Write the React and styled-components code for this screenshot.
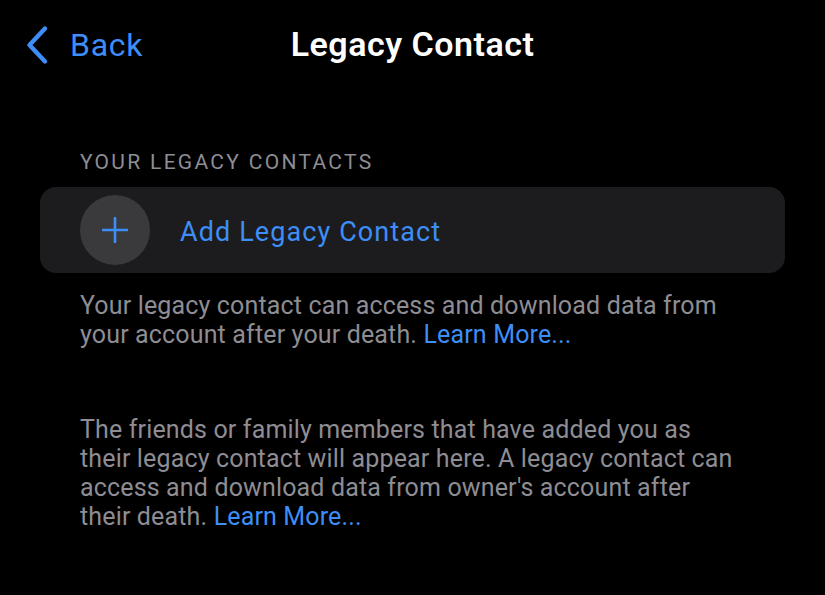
import React from 'react';
import styled, { createGlobalStyle } from 'styled-components';

const GlobalStyle = createGlobalStyle`
  html, body {
    margin: 0;
    padding: 0;
    background: #000;
  }
  body {
    font-family: Roboto, "Noto Sans", sans-serif;
    -webkit-font-smoothing: antialiased;
  }
`;

const App = () => {
  return (
    <Page>
      <GlobalStyle />
      <NavBar>
        <BackButton>
          <svg width="24" height="40" viewBox="0 0 24 40">
            <path
              d="M20 3.5 L4.5 20 L20 36.5"
              fill="none"
              stroke="#3e8ef7"
              strokeWidth="4.4"
              strokeLinecap="round"
              strokeLinejoin="round"
            />
          </svg>
          <BackLabel>Back</BackLabel>
        </BackButton>
        <Title>Legacy Contact</Title>
      </NavBar>

      <Content>
        <SectionHeader>YOUR LEGACY CONTACTS</SectionHeader>
        <Card>
          <AddCircle>
            <svg width="26" height="26" viewBox="0 0 26 26">
              <path d="M13 1 V25 M1 13 H25" stroke="#3e8ef7" strokeWidth="2.6" strokeLinecap="round" />
            </svg>
          </AddCircle>
          <AddLabel>Add Legacy Contact</AddLabel>
        </Card>
        <Footnote>
          Your legacy contact can access and download data from your account after your death.{' '}
          <Link>Learn More...</Link>
        </Footnote>

        <Footnote $spaced>
          The friends or family members that have added you as their legacy contact will appear here. A
          legacy contact can access and download data from owner's account after their death.{' '}
          <Link>Learn More...</Link>
        </Footnote>
      </Content>
    </Page>
  );
};

export default App;

const Page = styled.div`
  width: 825px;
  height: 595px;
  background: #000;
  overflow: hidden;
`;

const NavBar = styled.header`
  position: relative;
  height: 90px;
  display: flex;
  align-items: center;
  justify-content: center;
`;

const BackButton = styled.div`
  position: absolute;
  left: 25px;
  top: 25px;
  display: flex;
  align-items: center;
  gap: 21px;
`;

const BackLabel = styled.span`
  color: #3e8ef7;
  font-size: 32px;
  line-height: 38px;
  letter-spacing: 0.7px;
`;

const Title = styled.h1`
  margin: 0;
  margin-top: -2px;
  color: #fff;
  font-size: 34px;
  font-weight: 600;
  letter-spacing: 0.5px;
`;

const Content = styled.main`
  padding: 60px 40px 0 40px;
`;

const SectionHeader = styled.div`
  padding-left: 40px;
  color: #8d8d93;
  font-size: 21px;
  line-height: 24px;
  margin-bottom: 13px;
  letter-spacing: 2.3px;
`;

const Card = styled.div`
  height: 86px;
  background: #1c1c1e;
  border-radius: 16px;
  display: flex;
  align-items: center;
  padding-left: 40px;
  gap: 30px;
`;

const AddCircle = styled.div`
  width: 70px;
  height: 70px;
  border-radius: 50%;
  background: #3a3a3c;
  display: flex;
  align-items: center;
  justify-content: center;
`;

const AddLabel = styled.span`
  color: #3e8ef7;
  font-size: 27px;
  letter-spacing: 1.1px;
  margin-top: 3px;
`;

const Footnote = styled.p`
  margin: ${p => (p.$spaced ? '67px' : '19px')} 0 0 0;
  padding: 0 40px;
  max-width: 664px;
  color: #8d8d93;
  font-size: 25px;
  line-height: 28.7px;
  letter-spacing: 0.15px;
`;

const Link = styled.span`
  color: #3e8ef7;
`;
